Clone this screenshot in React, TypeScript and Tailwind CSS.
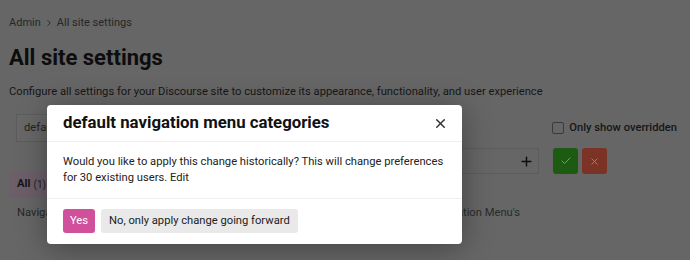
import { Check, ChevronRight, Plus, X } from "lucide-react";

export default function App() {
  return (
    <div
      className="relative w-[690px] h-[260px] overflow-hidden bg-[#666666] text-[#111]"
      style={{ fontFamily: "Roboto, 'Liberation Sans', sans-serif" }}
    >
      {/* dimmed admin page */}
      <div className="pl-[9px] pr-3 pt-[16px]">
        <div className="flex items-center gap-[3px] text-[11px] leading-[14px] text-[#262626]">
          <span>Admin</span>
          <ChevronRight size={10} strokeWidth={2.2} />
          <span>All site settings</span>
        </div>
        <h1 className="mt-[14px] text-[22px] leading-[28px] font-bold text-[#0d0d0d]">All site settings</h1>
        <p className="mt-[12px] text-[11.2px] leading-[16px] text-[#161616]">
          Configure all settings for your Discourse site to customize its appearance, functionality, and user experience
        </p>

        <div className="mt-[14px] flex items-center justify-between pl-[7px]">
          <div className="w-[300px] h-[28px] border border-[#5c5c5c] bg-[#686868] pl-[7px] flex items-center text-[11.2px] text-[#222]">
            default navigation menu categories
          </div>
          <label className="flex items-center gap-[5px] pr-[1px] text-[11.2px] font-medium text-[#161616]">
            <span className="w-[12px] h-[12px] rounded-[2px] border border-[#3a3a3a]" />
            Only show overridden
          </label>
        </div>

        <div className="mt-[6px] flex">
          <div className="w-[130px] pt-[23px]">
            <div className="h-[27px] bg-[#6c5f69] pl-[8px] flex items-center text-[11.2px]">
              <span className="font-bold text-[#161616]">All</span>
              <span className="ml-[3px] text-[10px] text-[#222]">(1)</span>
            </div>
            <div className="pl-[8px] mt-[7px] text-[11.2px] text-[#262626]">Navigation</div>
          </div>
          <div className="w-[160px]" />
          <div>
            <div className="flex items-center">
              <div className="w-[240px] h-[26px] border border-[#5c5c5c] flex items-center justify-end pr-[4px] text-[#0d0d0d]">
                <Plus size={15} strokeWidth={2.2} />
              </div>
              <button className="ml-[14px] w-[25px] h-[26px] rounded-[3px] bg-[#1d5a12] flex items-center justify-center text-[#7d9a78]">
                <Check size={12} strokeWidth={2} />
              </button>
              <button className="ml-[4px] w-[25px] h-[26px] rounded-[3px] bg-[#7a3325] flex items-center justify-center text-[#a88078]">
                <X size={11} strokeWidth={2} />
              </button>
            </div>
            <div className="mt-[32px] ml-[7px] text-[11.2px] leading-[14px] text-[#2a2a2a]">
              Categories shown in the Navigation Menu's
            </div>
          </div>
        </div>
      </div>

      {/* modal */}
      <div className="absolute left-[47px] top-[105px] w-[415px] bg-white rounded-[4px] shadow-[0_4px_30px_rgba(0,0,0,0.35)]">
        <div className="h-[37px] px-4 flex items-center justify-between border-b border-[#efefef]">
          <h2 className="text-[16.8px] font-bold text-[#111]">default navigation menu categories</h2>
          <X size={15} strokeWidth={2.4} className="text-[#333] mr-[-2px]" />
        </div>
        <div className="px-4 pt-[12px] pb-[12px] border-b border-[#efefef] text-[11.2px] leading-[16px] text-[#222]">
          Would you like to apply this change historically? This will change preferences for 30 existing users. Edit
        </div>
        <div className="px-4 pt-[10px] pb-[11px] flex gap-[6px]">
          <button className="h-[24px] px-[7px] rounded-[3px] bg-[#d1509b] text-white text-[11.2px]">Yes</button>
          <button className="h-[24px] px-[8px] rounded-[3px] bg-[#e9e9e9] text-[#222] text-[11.2px]">
            No, only apply change going forward
          </button>
        </div>
      </div>
    </div>
  );
}
